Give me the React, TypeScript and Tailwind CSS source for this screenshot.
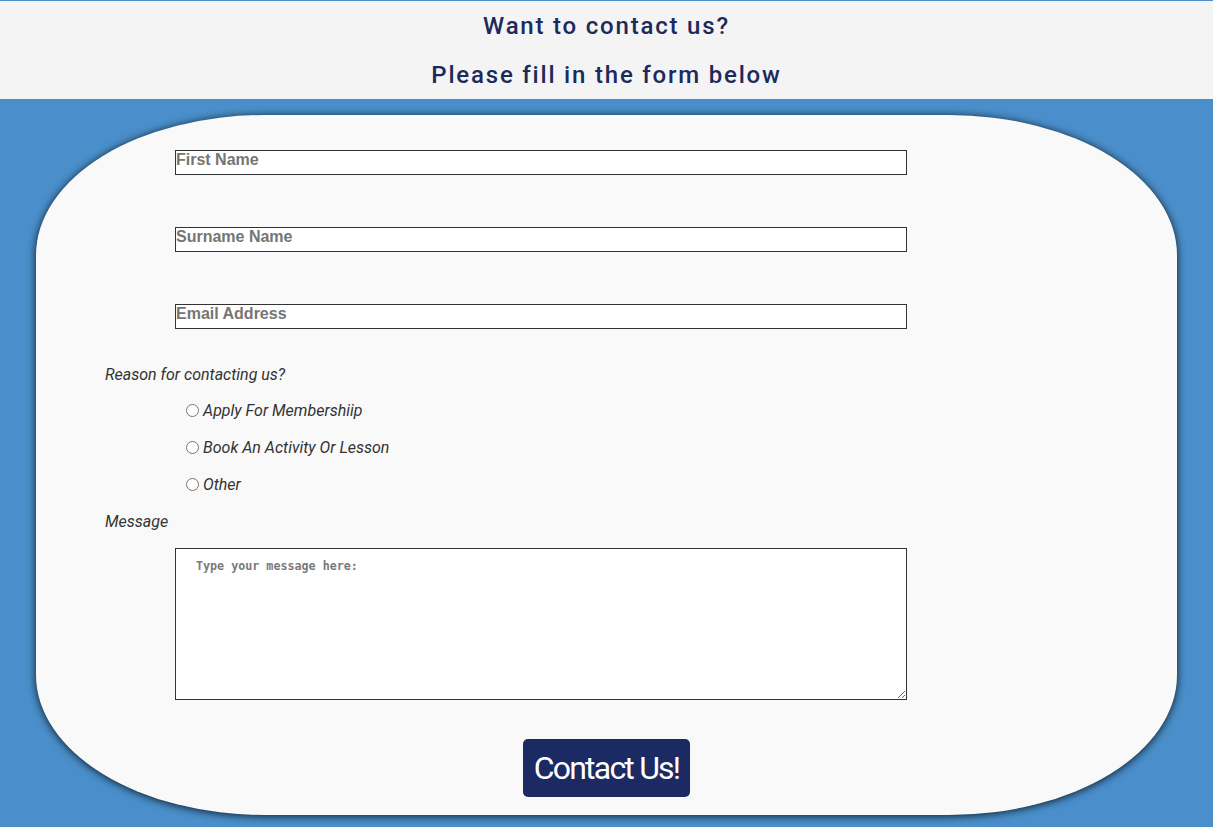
import React from "react";

const reasons = ["Apply For Membershiip", "Book An Activity Or Lesson", "Other"];

function TextField({ placeholder, className }: { placeholder: string; className?: string }) {
  return (
    <input
      type="text"
      placeholder={placeholder}
      className={
        "block w-[732px] h-[25px] ml-[70px] bg-white border border-[#333] px-0 text-[16px] font-bold text-[#333] placeholder:text-[#757575] outline-none leading-[19px] pb-[6px] " +
        (className || "")
      }
      style={{ fontFamily: '"Liberation Sans", Arial, sans-serif' }}
    />
  );
}

export default function App() {
  return (
    <div className="min-h-[827px] bg-[#4a8fcb] font-['Roboto',sans-serif]">
      {/* Header */}
      <header className="h-[99px] bg-[#f4f4f4] border-t border-[#4a8fcb] flex flex-col items-center text-[#1c2a5c]">
        <h2 className="mt-[11px] text-[24px] leading-[28px] font-medium tracking-[1.8px]">
          Want to contact us?
        </h2>
        <h2 className="mt-[21px] text-[24px] leading-[28px] font-medium tracking-[1.8px]">
          Please fill in the form below
        </h2>
      </header>

      {/* Form card */}
      <form
        className="mx-[36px] mt-[16px] h-[700px] bg-[#f9f9f9] rounded-[20%] shadow-[0_1px_8px_rgba(0,0,0,0.85)] pl-[69px] pt-[35px] text-[#333]"
        onSubmit={(e) => e.preventDefault()}
      >
        <TextField placeholder="First Name" />
        <TextField placeholder="Surname Name" className="mt-[52px]" />
        <TextField placeholder="Email Address" className="mt-[52px]" />

        <p className="mt-[36px] italic text-[16px] leading-[20px]">Reason for contacting us?</p>

        <div className="mt-[16px] flex flex-col gap-[17px] pl-[81px]">
          {reasons.map((r) => (
            <label key={r} className="flex items-center gap-[4px] italic text-[16px] leading-[20px]">
              <input type="radio" name="reason" className="m-0 w-[13px] h-[13px] -mt-[2px]" />
              {r}
            </label>
          ))}
        </div>

        <p className="mt-[17px] italic text-[16px] leading-[20px]">Message</p>

        <textarea
          placeholder="Type your message here:"
          className="block mt-[16px] ml-[70px] w-[732px] h-[152px] bg-white border border-[#333] pl-[20px] pt-[9px] text-[11.7px] font-bold text-[#333] placeholder:text-[#7a7a7a] outline-none"
          style={{ fontFamily: '"DejaVu Sans Mono", "Liberation Mono", monospace' }}
        />

        <div className="mt-[39px] flex justify-center pr-[69px]">
          <button
            type="submit"
            className="h-[58px] w-[167px] rounded-[5px] bg-[#1c2a63] text-white text-[32px] leading-none tracking-[-1.8px] font-normal"
          >
            Contact Us!
          </button>
        </div>
      </form>
    </div>
  );
}
